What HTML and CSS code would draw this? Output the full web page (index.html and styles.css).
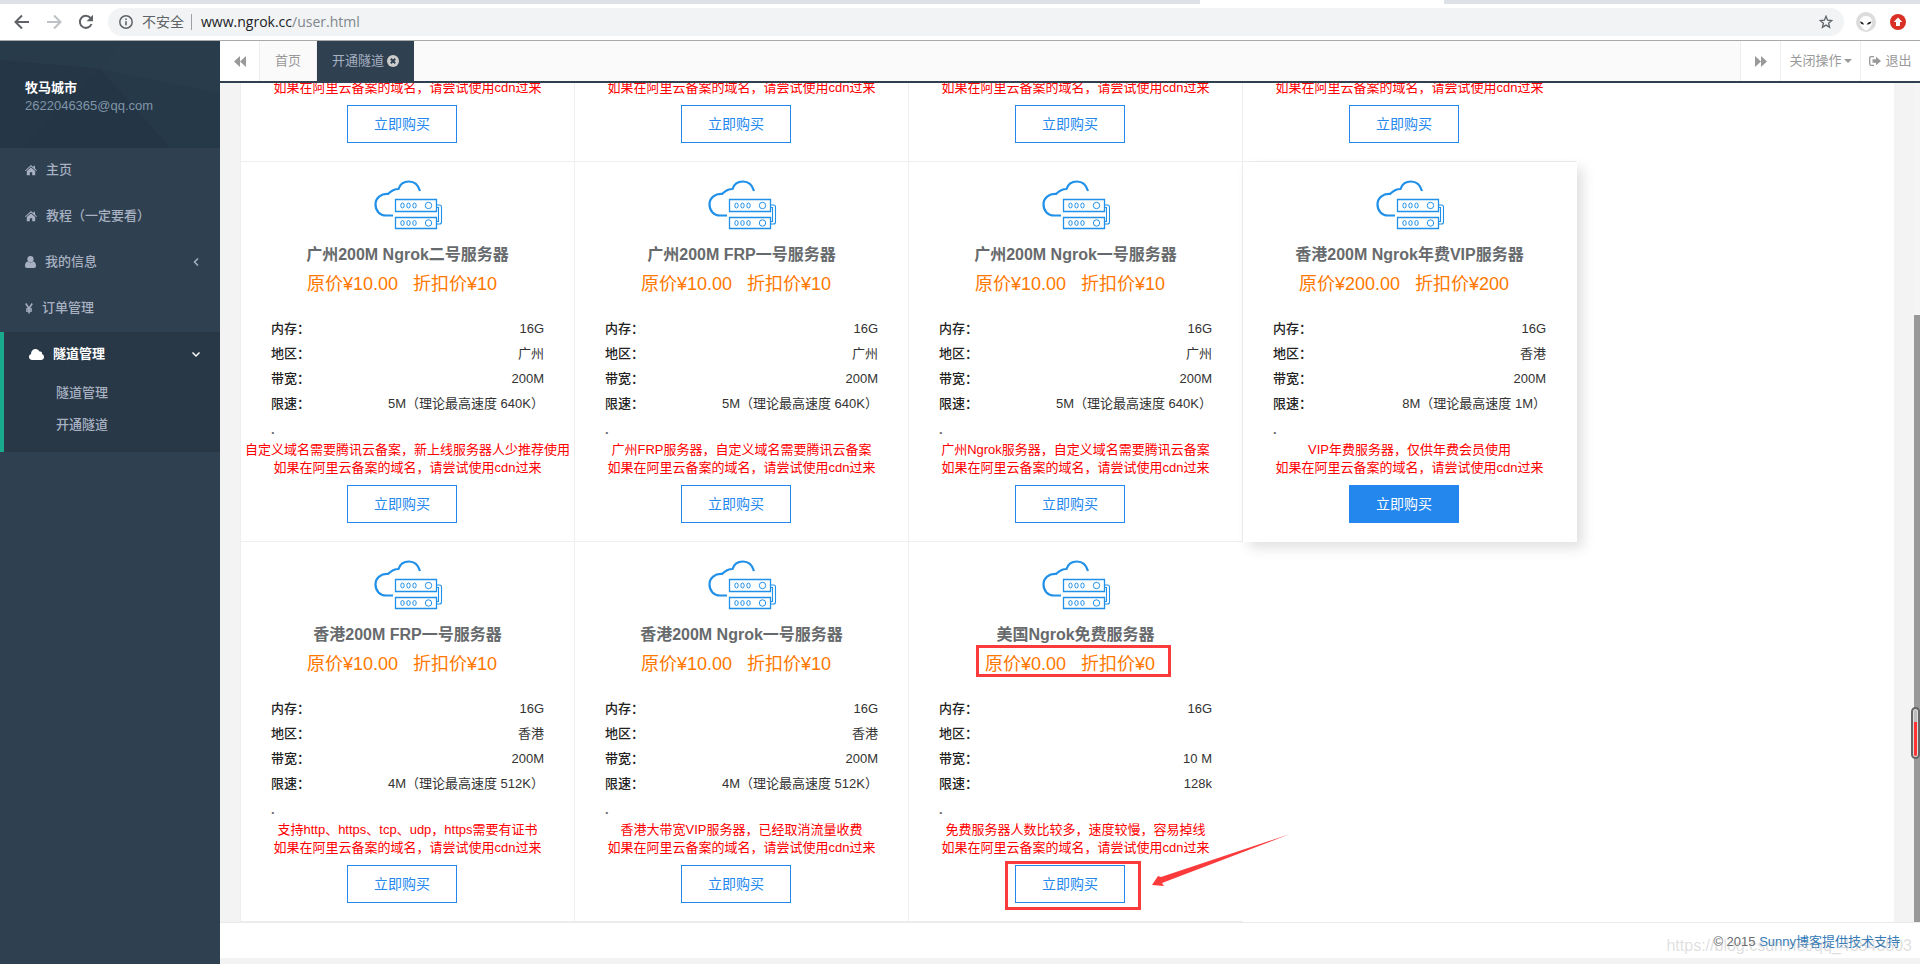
FILE: index.html
```html
<!DOCTYPE html>
<html lang="zh-CN">
<head>
<meta charset="utf-8">
<title>开通隧道</title>
<link rel="stylesheet" href="styles.css">
</head>
<body>
<svg class="defs" aria-hidden="true">
  <symbol id="home" viewBox="0 0 12 11"><path d="M6 0 0 5.4l.7.7L6 1.5l5.3 4.6.7-.7L10 3.6V.8H8.5v1.4z"/><path d="M6 2.4 1.8 6v4.2h3V7.3h2.4v2.9h3V6z"/></symbol>
  <symbol id="rewind" viewBox="0 0 12 11"><path d="M6 0v11L0 5.5zM12 0v11L6 5.5z"/></symbol>
  <symbol id="server" viewBox="0 0 70 50">
    <g fill="none" stroke="#2090e8">
      <path d="M46 11C44 4 40 1.500 35 1.500 30 1.500 26 4 24.500 9 20 9 17 11 14 14 7 13.500 1.500 18 1.500 24.500 1.500 31 6 35.500 12 35.500h7" stroke-width="2.200"/>
      <path d="M21.500 19.500h41v12h-41zM21.500 37.500h41v11h-41z" stroke-width="1.300"/>
      <path d="M62.500 25h3q2 0 2 2v15q0 2-2 2h-3M62.500 27.500h2v14h-2" stroke-width="1.100"/>
      <ellipse cx="28.500" cy="25.500" rx="1.700" ry="2.500"/><ellipse cx="34.500" cy="25.500" rx="1.700" ry="2.500"/><ellipse cx="40.500" cy="25.500" rx="1.700" ry="2.500"/><circle cx="54.500" cy="25.500" r="3.200"/>
      <ellipse cx="28.500" cy="43" rx="1.700" ry="2.500"/><ellipse cx="34.500" cy="43" rx="1.700" ry="2.500"/><ellipse cx="40.500" cy="43" rx="1.700" ry="2.500"/><circle cx="54.500" cy="43" r="3.200"/>
    </g>
  </symbol>
</svg>
<div class="browser">
  <div class="tabstrip"><span class="tab-active"></span></div>
  <div class="toolbar">
    <button class="nav-btn" aria-label="后退"><svg viewBox="0 0 16 16" width="16" height="16"><path d="M15 8H2M8 1.500 1.500 8 8 14.500" fill="none" stroke="#5f6368" stroke-width="2"/></svg></button>
    <button class="nav-btn" aria-label="前进"><svg viewBox="0 0 16 16" width="16" height="16"><path d="M1 8h13M8 1.500 14.500 8 8 14.500" fill="none" stroke="#bdc1c6" stroke-width="2"/></svg></button>
    <button class="nav-btn" aria-label="刷新"><svg viewBox="0 0 16 16" width="16" height="16"><path d="M13.500 10A6 6 0 1 1 12.500 4" fill="none" stroke="#5f6368" stroke-width="2"/><path d="M15 .8v6.400H8.600z" fill="#5f6368"/></svg></button>
    <div class="omnibox">
      <svg viewBox="0 0 14 14" width="14" height="14"><circle cx="7" cy="7" r="6.200" fill="none" stroke="#5f6368" stroke-width="1.500"/><path d="M6.200 6.200h1.600v4H6.200zM6.200 3.500h1.600v1.600H6.200z" fill="#5f6368"/></svg>
      <span class="insecure">不安全</span>
      <span class="url"><b>www.ngrok.cc</b>/user.html</span>
      <svg class="star" viewBox="0 0 14 14" width="14" height="14"><path d="M7 1.300 8.600 5.200l4.200.3-3.200 2.700 1 4.100L7 10.100l-3.600 2.200 1-4.100L1.200 5.500l4.200-.3z" fill="none" stroke="#5f6368" stroke-width="1.300"/></svg>
    </div>
    <svg class="avatar" viewBox="0 0 20 20" width="20" height="20"><circle cx="10" cy="10" r="10" fill="#dcdcdc"/><path d="M10 4c4.500 0 6.500 3 6 7-.5 3-3 6.500-6 7.500-3-1-5.500-4.500-6-7.500-.5-4 1.500-7 6-7z" fill="#fff"/><path d="M4 9.500q3 0 4 3-3 .5-4-3zM15.500 9.500q-3 0-5 2.800 4 .7 5-2.800z" fill="#222"/></svg>
    <svg class="update" viewBox="0 0 16 16" width="16" height="16"><circle cx="8" cy="8" r="8" fill="#d93025"/><path d="M8 3.500 12.300 8H10v4H6V8H3.700z" fill="#fff"/></svg>
  </div>
</div>
<div class="app">
  <aside class="sidebar">
    <div class="profile">
      <svg class="facets" viewBox="0 0 220 107" preserveAspectRatio="none"><path d="M0 0h220v107H0z" fill="#263948"/><path d="M0 0h120L100 28 0 19z" fill="#283b4a"/><path d="M120 0h100v52L100 28z" fill="#293c4b"/><path d="M0 19 100 28 20 107H0z" fill="#253746"/><path d="M100 28 170 107H20z" fill="#243645"/></svg>
      <strong>牧马城市</strong>
      <span>2622046365@qq.com</span>
    </div>
    <nav>
      <a class="item" href="#"><svg width="12" height="11"><use href="#home"/></svg>主页</a>
      <a class="item" href="#"><svg width="12" height="11"><use href="#home"/></svg>教程（一定要看）</a>
      <a class="item" href="#"><svg viewBox="0 0 11 12" width="11" height="12"><circle cx="5.500" cy="3.200" r="3.100"/><path d="M2.700 5.500C.8 5.800 0 7.500 0 9.800 0 11.300.7 12 2 12h7c1.300 0 2-.7 2-2.200 0-2.300-.8-4-2.700-4.300-1.500 1.400-4.100 1.400-5.600 0z"/></svg>我的信息<svg class="caret" viewBox="0 0 8 8" width="8" height="8"><path d="M6 .5 2.500 4 6 7.500"/></svg></a>
      <a class="item" href="#"><svg viewBox="0 0 8 11" width="8" height="11"><path d="M.8.500 4 5.500 7.200.5M4 5v5.500M1 6h6M1 8h6" fill="none" stroke="#a7b1c2" stroke-width="1.500"/></svg>订单管理</a>
      <div class="group">
        <a class="item" href="#"><svg viewBox="0 0 15 11" width="15" height="11"><path d="M3.200 11C1.300 11 0 9.600 0 8c0-1.500.9-2.500 2.100-2.900C1.900 2.200 4 0 6.500 0c1.900 0 3.300 1 4 2.600 1.600-.5 3 .9 2.500 2.400 1.200.5 2 1.500 2 2.900 0 1.800-1.300 3.100-3.100 3.100z"/></svg>隧道管理<svg class="caret" viewBox="0 0 8 8" width="8" height="8"><path d="M.5 2.500 4 6l3.500-3.500"/></svg></a>
        <a class="sub" href="#">隧道管理</a>
        <a class="sub" href="#">开通隧道</a>
      </div>
    </nav>
  </aside>
  <div class="page">
    <div class="tabs">
      <button class="roll left" aria-label="向左"><svg width="12" height="11"><use href="#rewind"/></svg></button>
      <a class="tab" href="#">首页</a>
      <a class="tab active" href="#">开通隧道<svg viewBox="0 0 12 12" width="12" height="12"><circle cx="6" cy="6" r="6" fill="#ccc"/><path d="M3.800 3.800l4.400 4.400M8.200 3.800 3.800 8.200" stroke="#2f4050" stroke-width="2"/></svg></a>
      <button class="roll right" aria-label="向右"><svg class="flip" width="12" height="11"><use href="#rewind"/></svg></button>
      <button class="ops">关闭操作<i class="down"></i></button>
      <a class="exit" href="#"><svg viewBox="0 0 12 10" width="12" height="10"><path d="M5 .7H2Q.7.700.7 2v6Q.7 9.300 2 9.300h3" fill="none" stroke="#999" stroke-width="1.300"/><path d="M3.500 3.300H7V.8L12 5 7 9.200V6.700H3.500z"/></svg>退出</a>
    </div>
    <main class="content">
      <div class="panel">
        <section class="card"><p class="note">如果在阿里云备案的域名，请尝试使用cdn过来</p><button class="buy">立即购买</button></section>
        <section class="card"><p class="note">如果在阿里云备案的域名，请尝试使用cdn过来</p><button class="buy">立即购买</button></section>
        <section class="card"><p class="note">如果在阿里云备案的域名，请尝试使用cdn过来</p><button class="buy">立即购买</button></section>
        <section class="card last"><p class="note">如果在阿里云备案的域名，请尝试使用cdn过来</p><button class="buy">立即购买</button></section>

        <section class="card">
          <svg class="server" width="70" height="50"><use href="#server"/></svg>
          <h3>广州200M Ngrok二号服务器</h3>
          <p class="price"><span>原价¥10.00</span><span>折扣价¥10</span></p>
          <dl><dt>内存：</dt><dd>16G</dd><dt>地区：</dt><dd>广州</dd><dt>带宽：</dt><dd>200M</dd><dt>限速：</dt><dd>5M（理论最高速度 640K）</dd></dl>
          <p class="dot">.</p>
          <p class="note">自定义域名需要腾讯云备案，新上线服务器人少推荐使用<br>如果在阿里云备案的域名，请尝试使用cdn过来</p>
          <button class="buy">立即购买</button>
        </section>
        <section class="card">
          <svg class="server" width="70" height="50"><use href="#server"/></svg>
          <h3>广州200M FRP一号服务器</h3>
          <p class="price"><span>原价¥10.00</span><span>折扣价¥10</span></p>
          <dl><dt>内存：</dt><dd>16G</dd><dt>地区：</dt><dd>广州</dd><dt>带宽：</dt><dd>200M</dd><dt>限速：</dt><dd>5M（理论最高速度 640K）</dd></dl>
          <p class="dot">.</p>
          <p class="note">广州FRP服务器，自定义域名需要腾讯云备案<br>如果在阿里云备案的域名，请尝试使用cdn过来</p>
          <button class="buy">立即购买</button>
        </section>
        <section class="card">
          <svg class="server" width="70" height="50"><use href="#server"/></svg>
          <h3>广州200M Ngrok一号服务器</h3>
          <p class="price"><span>原价¥10.00</span><span>折扣价¥10</span></p>
          <dl><dt>内存：</dt><dd>16G</dd><dt>地区：</dt><dd>广州</dd><dt>带宽：</dt><dd>200M</dd><dt>限速：</dt><dd>5M（理论最高速度 640K）</dd></dl>
          <p class="dot">.</p>
          <p class="note">广州Ngrok服务器，自定义域名需要腾讯云备案<br>如果在阿里云备案的域名，请尝试使用cdn过来</p>
          <button class="buy">立即购买</button>
        </section>
        <section class="card hover">
          <svg class="server" width="70" height="50"><use href="#server"/></svg>
          <h3>香港200M Ngrok年费VIP服务器</h3>
          <p class="price"><span>原价¥200.00</span><span>折扣价¥200</span></p>
          <dl><dt>内存：</dt><dd>16G</dd><dt>地区：</dt><dd>香港</dd><dt>带宽：</dt><dd>200M</dd><dt>限速：</dt><dd>8M（理论最高速度 1M）</dd></dl>
          <p class="dot">.</p>
          <p class="note">VIP年费服务器，仅供年费会员使用<br>如果在阿里云备案的域名，请尝试使用cdn过来</p>
          <button class="buy">立即购买</button>
        </section>
        <section class="card">
          <svg class="server" width="70" height="50"><use href="#server"/></svg>
          <h3>香港200M FRP一号服务器</h3>
          <p class="price"><span>原价¥10.00</span><span>折扣价¥10</span></p>
          <dl><dt>内存：</dt><dd>16G</dd><dt>地区：</dt><dd>香港</dd><dt>带宽：</dt><dd>200M</dd><dt>限速：</dt><dd>4M（理论最高速度 512K）</dd></dl>
          <p class="dot">.</p>
          <p class="note">支持http、https、tcp、udp，https需要有证书<br>如果在阿里云备案的域名，请尝试使用cdn过来</p>
          <button class="buy">立即购买</button>
        </section>
        <section class="card">
          <svg class="server" width="70" height="50"><use href="#server"/></svg>
          <h3>香港200M Ngrok一号服务器</h3>
          <p class="price"><span>原价¥10.00</span><span>折扣价¥10</span></p>
          <dl><dt>内存：</dt><dd>16G</dd><dt>地区：</dt><dd>香港</dd><dt>带宽：</dt><dd>200M</dd><dt>限速：</dt><dd>4M（理论最高速度 512K）</dd></dl>
          <p class="dot">.</p>
          <p class="note">香港大带宽VIP服务器，已经取消流量收费<br>如果在阿里云备案的域名，请尝试使用cdn过来</p>
          <button class="buy">立即购买</button>
        </section>
        <section class="card free">
          <svg class="server" width="70" height="50"><use href="#server"/></svg>
          <h3>美国Ngrok免费服务器</h3>
          <p class="price"><span>原价¥0.00</span><span>折扣价¥0</span></p>
          <dl><dt>内存：</dt><dd>16G</dd><dt>地区：</dt><dd></dd><dt>带宽：</dt><dd>10 M</dd><dt>限速：</dt><dd>128k</dd></dl>
          <p class="dot">.</p>
          <p class="note">免费服务器人数比较多，速度较慢，容易掉线<br>如果在阿里云备案的域名，请尝试使用cdn过来</p>
          <button class="buy">立即购买</button>
          <i class="mark mark-price"></i>
          <i class="mark mark-buy"></i>
          <svg class="arrow" viewBox="0 0 138 53" width="138" height="53"><path d="M138 0 9 43 6 42 0 51 12 52 10 49z" fill="#fb3b3b"/></svg>
        </section>
      </div>
      <div class="scroll"><i class="thumb"></i><i class="meter"></i></div>
    </main>
    <footer>© 2015 <a href="#">Sunny博客提供技术支持</a><span class="watermark">https://blog.csdn.net/qq_43843503</span></footer>
  </div>
</div>
</body>
</html>
```
FILE: styles.css
```css
* { box-sizing: border-box; }
body {
  margin: 0;
  height: 100vh;
  display: flex;
  flex-direction: column;
  overflow: hidden;
  background: #f3f3f4;
  color: #676a6c;
  font: 13px/18px "Liberation Sans", "Noto Sans CJK SC", sans-serif;
}
a { color: inherit; text-decoration: none; }
button { font: inherit; color: inherit; background: none; border: 0; padding: 0; }
p, h3, dl, dd { margin: 0; }
svg { display: block; flex: none; }
.defs { position: absolute; width: 0; height: 0; }

.browser { border-bottom: 1px solid #a9a9a9; background: #fff; }
.tabstrip { height: 4px; background: #dee1e6; padding-left: 1200px; }
.tab-active { display: block; width: 244px; height: 4px; background: #fff; }
.toolbar { height: 36px; display: flex; align-items: center; padding: 0 14px; }
.nav-btn { width: 16px; margin-right: 16px; }
.omnibox {
  flex: 1;
  height: 28px;
  border-radius: 14px;
  background: #f1f3f4;
  display: flex;
  align-items: center;
  padding: 0 11px;
  margin-right: 12px;
  margin-left: -2px;
  color: #5f6368;
  font: 14px/20px "Open Sans", "Noto Sans CJK SC", sans-serif;
}
.insecure { margin-left: 9px; padding-right: 7px; border-right: 1px solid #9aa0a6; line-height: 16px; }
.url { margin-left: 9px; color: #80868b; }
.url b { font-weight: 400; color: #202124; }
.star { margin-left: auto; }
.avatar { margin-right: 14px; }

.app { flex: 1; min-height: 0; display: flex; }
.sidebar { width: 220px; flex: none; background: #2f4050; color: #a7b1c2; }
.profile { position: relative; padding: 38px 25px 33px; color: #8095a8; }
.facets { position: absolute; inset: 0; width: 100%; height: 100%; }
.profile strong { position: relative; display: block; color: #fff; }
.profile span { position: relative; display: block; }
.item { display: flex; align-items: center; height: 46px; padding: 0 20px 2px 25px; font-weight: 500; }
.item svg { fill: #a7b1c2; margin-right: 9px; }
.item .caret { margin: 0 0 0 auto; fill: none; stroke: currentColor; stroke-width: 1.5; }
.group { border-left: 4px solid #19aa8d; background: #293846; padding-bottom: 10px; }
.group .item { color: #fff; font-weight: 700; }
.group .item svg { fill: #fff; }
.group .item .caret { fill: none; }
.sub { display: block; padding: 6px 0 8px 52px; font-weight: 500; }

.page { flex: 1; min-width: 0; display: flex; flex-direction: column; }
.tabs { display: flex; height: 42px; border-bottom: 2px solid #2f4050; background: #fafafa; color: #999; }
.tabs > * { display: flex; align-items: center; justify-content: center; }
.tabs svg { fill: #999; }
.roll { width: 40px; background: #fff; }
.left { border-right: 1px solid #eee; }
.right { margin-left: auto; border-left: 1px solid #eee; }
.flip { transform: scaleX(-1); }
.tab { padding: 0 15px; border-right: 1px solid #eee; }
.tab.active { background: #2f4050; color: #a7b1c2; gap: 3px; border: 0; }
.ops { width: 80px; gap: 2px; background: #fff; border-left: 1px solid #eee; }
.down { border: 4px solid transparent; border-top-color: #999; border-bottom: 0; }
.exit { width: 60px; gap: 4px; background: #fff; border-left: 1px solid #eee; }

.content { flex: 1; min-height: 0; overflow: hidden; position: relative; display: flex; align-items: flex-end; padding: 0 26px 0 20px; background: #f3f3f3; }
.panel {
  flex: 1;
  display: grid;
  grid-template-columns: repeat(auto-fill, 334px);
  background: #fff;
  border-left: 1px solid #eee;
  justify-content: start;
  padding-right: 200px;
}
.card {
  position: relative;
  display: flex;
  flex-direction: column;
  align-items: center;
  border-right: 1px solid #eee;
  border-bottom: 1px solid #eee;
  padding-bottom: 18px;
}
.card.last { border-right-color: transparent; }
.card.free { border-right: 0; padding-right: 1px; }
.card.hover { border-color: transparent; box-shadow: 6px 6px 12px rgba(0, 0, 0, .12); z-index: 1; }
.server { margin: 18px 0 12px 3px; }
h3 { font-size: 16px; line-height: 26px; font-weight: 700; }
.price { display: flex; gap: 15px; margin-right: 11px; font-size: 18px; line-height: 33px; color: #ff7800; }
dl { align-self: stretch; display: grid; grid-template-columns: auto 1fr; margin: 15px 30px 0; line-height: 25px; color: #333; }
dt { font-weight: 500; color: #222; }
dd { text-align: right; }
.dot { align-self: stretch; margin: 3px 30px 0; line-height: 22px; font-weight: 700; }
.note { text-align: center; color: #f00; white-space: nowrap; }
.buy { width: 110px; height: 38px; margin: 8px 11px 0 0; border: 1px solid #2487ee; color: #2487ee; font-size: 14px; }
.hover .buy { background: #2487ee; color: #fff; }
.mark { position: absolute; border: 3px solid #fb3b3b; }
.mark-price { left: 67px; top: 103px; width: 195px; height: 32px; }
.mark-buy { left: 96px; bottom: 11px; width: 136px; height: 49px; }
.arrow { position: absolute; left: 243px; bottom: 34px; }

.scroll { position: absolute; right: 0; top: 0; bottom: 0; width: 6px; background: #f5f5f5; }
.thumb { position: absolute; right: 0; bottom: 0; width: 6px; height: 72.3%; background: #999; }
.meter { position: absolute; right: 0; bottom: 163px; width: 9px; height: 52px; padding: 1px; border: 2px solid #666; border-radius: 5px; background: linear-gradient(#bbb 12px, #f33 12px) content-box, #ddd; }

footer { position: relative; border-top: 1px solid #e7eaec; border-bottom: 6px solid #f3f3f3; height: 42px; padding: 10px 20px; background: #fff; text-align: right; }
footer a { color: #337ab7; }
.watermark { position: absolute; right: 8px; top: 13px; font-size: 16px; line-height: 20px; color: rgba(160, 160, 160, .35); }
```
